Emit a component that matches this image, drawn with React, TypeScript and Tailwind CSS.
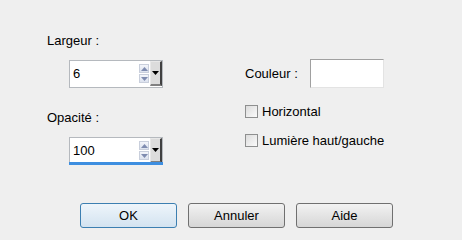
import React from "react";

const font = { fontFamily: '"Liberation Sans", Arial, sans-serif' };

function Spin({ value, blue }: { value: string; blue?: boolean }) {
  return (
    <div className="relative ml-[22px] flex h-[28px] w-[94px] border border-[#b5b9be] bg-white">
      <div className="flex-1 pl-[3px] pt-[5px] text-[13px] leading-[15px] text-black">{value}</div>
      <div className="mt-[3px] flex w-[10px] flex-col gap-[1px]">
        <div className="flex h-[9px] items-center justify-center border border-[#c9cfdc] bg-gradient-to-b from-[#f3f5fa] to-[#dde3ef]">
          <svg width="7" height="4" viewBox="0 0 7 4"><path d="M0 4 L3.5 0 L7 4 Z" fill="#7f8cb0" /></svg>
        </div>
        <div className="flex h-[9px] items-center justify-center border border-[#c9cfdc] bg-gradient-to-b from-[#f3f5fa] to-[#dde3ef]">
          <svg width="7" height="4" viewBox="0 0 7 4"><path d="M0 0 L3.5 4 L7 0 Z" fill="#7f8cb0" /></svg>
        </div>
      </div>
      <div className="ml-[1px] flex h-[25px] w-[12px] items-center justify-center border-t border-l border-r-2 border-b-2 border-t-[#e8e8e8] border-l-[#e8e8e8] border-r-[#404040] border-b-[#808080] bg-[#dcdcdc]">
        <svg width="7" height="4" viewBox="0 0 7 4"><path d="M0 0 L3.5 4 L7 0 Z" fill="#000" /></svg>
      </div>
      {blue && <div className="absolute bottom-[-1px] left-[-1px] right-[-1px] h-[3px] bg-[#3d8ee0]" />}
    </div>
  );
}

function Check({ label }: { label: string }) {
  return (
    <div className="flex h-[13px] items-center">
      <div className="h-[13px] w-[13px] border border-[#8e8f8f] bg-gradient-to-br from-[#dcdcdc] to-[#fbfbfb]" />
      <span className="ml-[4px] text-[13px] leading-[13px] text-black">{label}</span>
    </div>
  );
}

function Btn({ label, def }: { label: string; def?: boolean }) {
  return (
    <div
      className={
        "flex h-[25px] w-[97px] items-center justify-center rounded-[3px] border text-[13px] text-black " +
        (def
          ? "border-[#3c7fb1] bg-gradient-to-b from-[#eef5fb] to-[#d3e3f0]"
          : "border-[#707070] bg-gradient-to-b from-[#f2f2f2] to-[#d6d6d6]")
      }
    >
      {label}
    </div>
  );
}

export default function App() {
  return (
    <div className="h-[240px] w-[462px] bg-[#efefef]" style={font}>
      <div className="flex">
        <div className="ml-[47px] flex w-[198px] flex-col pt-[33px]">
          <div className="h-[15px] text-[13px] leading-[15px] text-black">Largeur :</div>
          <div className="mt-[12px]">
            <Spin value="6" />
          </div>
          <div className="mt-[22px] h-[15px] text-[13px] leading-[15px] text-black">Opacité :</div>
          <div className="mt-[12px]">
            <Spin value="100" blue />
          </div>
        </div>
        <div className="flex flex-col pt-[59px]">
          <div className="flex h-[29px] items-center">
            <span className="w-[65px] text-[13px] leading-[15px] text-black">Couleur :</span>
            <div className="h-[29px] w-[74px] border border-t-[#a0a0a0] border-l-[#a0a0a0] border-r-[#e3e3e3] border-b-[#e3e3e3] bg-white" />
          </div>
          <div className="mt-[17px]">
            <Check label="Horizontal" />
          </div>
          <div className="mt-[16px]">
            <Check label="Lumière haut/gauche" />
          </div>
        </div>
      </div>
      <div className="ml-[80px] mt-[38px] flex gap-[11px]">
        <Btn label="OK" def />
        <Btn label="Annuler" />
        <Btn label="Aide" />
      </div>
    </div>
  );
}
